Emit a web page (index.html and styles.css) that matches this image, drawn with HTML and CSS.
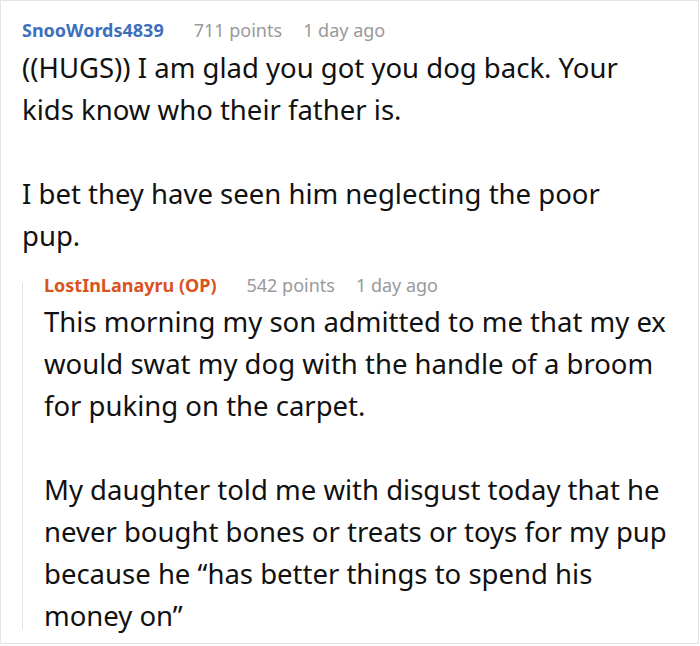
FILE: index.html
```html
<!DOCTYPE html>
<html>
<head>
<meta charset="utf-8">
<link rel="stylesheet" href="styles.css">
</head>
<body>
<div class="frame">
  <div class="comment">
    <div class="meta"><span class="author">SnooWords4839</span><span class="points">711 points</span><span class="time">1 day ago</span></div>
    <div class="body top">
      <p>((HUGS)) I am glad you got you dog back. Your kids know who their father is.</p>
      <p>I bet they have seen him neglecting the poor pup.</p>
    </div>
    <div class="reply">
      <div class="thread-line"></div>
      <div class="reply-content">
        <div class="meta"><span class="author op">LostInLanayru (OP)</span><span class="points">542 points</span><span class="time">1 day ago</span></div>
        <div class="body">
          <p>This morning my son admitted to me that my ex would swat my dog with the handle of a broom for puking on the carpet.</p>
          <p>My daughter told me with disgust today that he never bought bones or treats or toys for my pup because he “has better things to spend his money on”</p>
        </div>
      </div>
    </div>
  </div>
</div>
</body>
</html>
```
FILE: styles.css
```css
html, body {
  margin: 0;
  padding: 0;
  background: #fff;
}
.frame {
  width: 699px;
  height: 644px;
  box-sizing: border-box;
  border: 1px solid #e4e4e4;
  overflow: hidden;
  font-family: "Noto Sans", sans-serif;
}
.comment {
  padding: 16px 0 0 21px;
}
.meta {
  display: flex;
  font-size: 18px;
  line-height: 26px;
  height: 26px;
}
.author {
  font-weight: bold;
  color: #3d6fbd;
  margin-right: 30px;
}
.author.op {
  color: #d9531e;
}
.points {
  color: #999;
  margin-right: 21px;
}
.time {
  color: #999;
}
.body {
  font-size: 27.5px;
  line-height: 42px;
  color: #111;
  margin-top: 4px;
}
.body.top {
  padding-right: 50px;
}
.body p {
  margin: 0 0 42px 0;
}
.body p:last-child {
  margin-bottom: 0;
}
.reply {
  display: flex;
  margin-top: 15px;
}
.thread-line {
  width: 1px;
  flex: none;
  background: #e2e2e2;
  margin: 11px 0 8px 0;
}
.reply-content {
  flex: none;
  width: 640px;
  padding-left: 21px;
}
.reply-content .body {
  margin-top: 3px;
}
```
